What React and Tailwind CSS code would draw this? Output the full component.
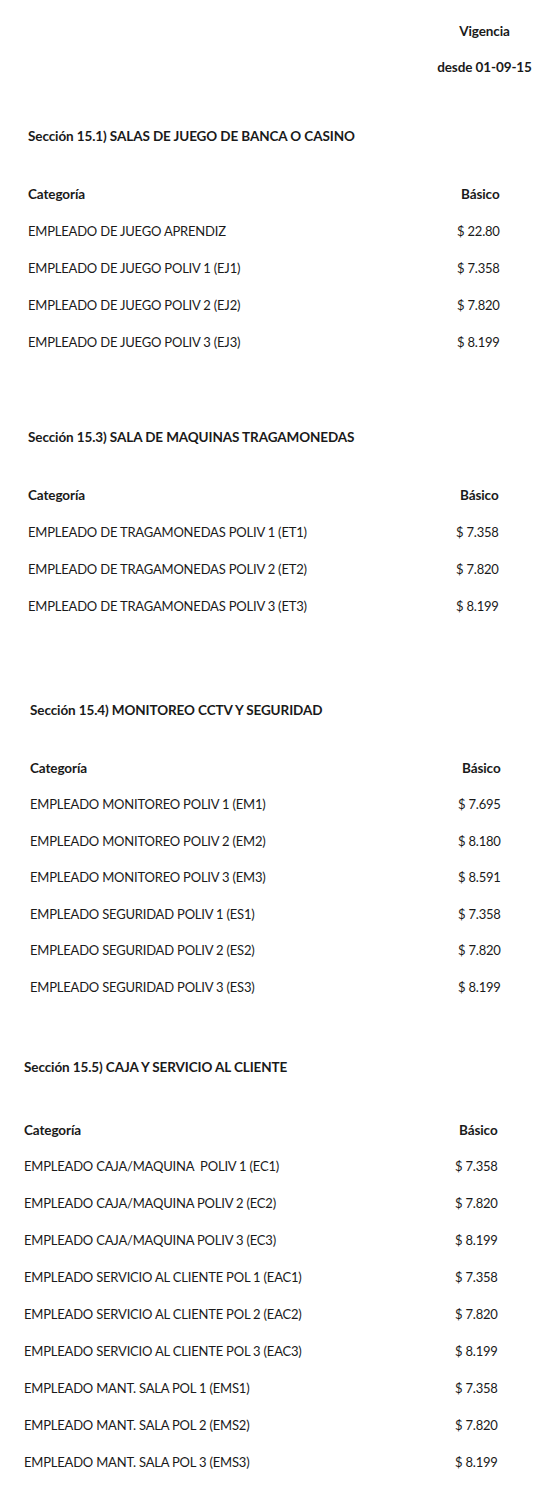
import React from 'react';

const SECTIONS = [
  {
    title: 'Sección 15.1) SALAS DE JUEGO DE BANCA O CASINO',
    top: 'mt-[33px]',
    headGap: 'mt-[21px]',
    row: 'h-[37px]',
    left: 'pl-[28px]',
    price: 'w-[429px]',
    items: [
      ['EMPLEADO DE JUEGO APRENDIZ', '$ 22.80'],
      ['EMPLEADO DE JUEGO POLIV 1 (EJ1)', '$ 7.358'],
      ['EMPLEADO DE JUEGO POLIV 2 (EJ2)', '$ 7.820'],
      ['EMPLEADO DE JUEGO POLIV 3 (EJ3)', '$ 8.199'],
    ],
  },
  {
    title: 'Sección 15.3) SALA DE MAQUINAS TRAGAMONEDAS',
    top: 'mt-[58px]',
    headGap: 'mt-[21px]',
    row: 'h-[37px]',
    left: 'pl-[28px]',
    price: 'w-[428px]',
    items: [
      ['EMPLEADO DE TRAGAMONEDAS POLIV 1 (ET1)', '$ 7.358'],
      ['EMPLEADO DE TRAGAMONEDAS POLIV 2 (ET2)', '$ 7.820'],
      ['EMPLEADO DE TRAGAMONEDAS POLIV 3 (ET3)', '$ 8.199'],
    ],
  },
  {
    title: 'Sección 15.4) MONITOREO CCTV Y SEGURIDAD',
    top: 'mt-[67px]',
    headGap: 'mt-[21px]',
    row: 'h-[36.5px]',
    left: 'pl-[30px]',
    price: 'w-[428px]',
    items: [
      ['EMPLEADO MONITOREO POLIV 1 (EM1)', '$ 7.695'],
      ['EMPLEADO MONITOREO POLIV 2 (EM2)', '$ 8.180'],
      ['EMPLEADO MONITOREO POLIV 3 (EM3)', '$ 8.591'],
      ['EMPLEADO SEGURIDAD POLIV 1 (ES1)', '$ 7.358'],
      ['EMPLEADO SEGURIDAD POLIV 2 (ES2)', '$ 7.820'],
      ['EMPLEADO SEGURIDAD POLIV 3 (ES3)', '$ 8.199'],
    ],
  },
  {
    title: 'Sección 15.5) CAJA Y SERVICIO AL CLIENTE',
    top: 'mt-[43px]',
    headGap: 'mt-[26px]',
    row: 'h-[37px]',
    left: 'pl-[24px]',
    price: 'w-[431px]',
    items: [
      ['EMPLEADO CAJA/MAQUINA  POLIV 1 (EC1)', '$ 7.358'],
      ['EMPLEADO CAJA/MAQUINA POLIV 2 (EC2)', '$ 7.820'],
      ['EMPLEADO CAJA/MAQUINA POLIV 3 (EC3)', '$ 8.199'],
      ['EMPLEADO SERVICIO AL CLIENTE POL 1 (EAC1)', '$ 7.358'],
      ['EMPLEADO SERVICIO AL CLIENTE POL 2 (EAC2)', '$ 7.820'],
      ['EMPLEADO SERVICIO AL CLIENTE POL 3 (EAC3)', '$ 8.199'],
      ['EMPLEADO MANT. SALA POL 1 (EMS1)', '$ 7.358'],
      ['EMPLEADO MANT. SALA POL 2 (EMS2)', '$ 7.820'],
      ['EMPLEADO MANT. SALA POL 3 (EMS3)', '$ 8.199'],
    ],
  },
];

function Section({ s }) {
  return (
    <section className={`${s.top} ${s.left}`}>
      <h2 className="h-[37px] flex items-center font-bold text-[13.5px] tracking-[-0.1px]">{s.title}</h2>
      <div className={`${s.headGap} ${s.row} flex items-center font-bold text-[13.5px] tracking-[-0.1px]`}>
        <span className={`${s.price} shrink-0`}>Categoría</span>
        <span className="pl-[4px]">Básico</span>
      </div>
      {s.items.map(([name, value]) => (
        <div key={name} className={`${s.row} flex items-center`}>
          <span className={`${s.price} shrink-0 whitespace-pre`}>{name}</span>
          <span>{value}</span>
        </div>
      ))}
    </section>
  );
}

export default function App() {
  return (
    <div className="w-[551px] min-h-[1491px] bg-white text-[#1a1a1a] text-[13px] tracking-[-0.2px] font-['Lato',sans-serif] pt-[13px]">
      <div className="flex justify-end pr-[18px] font-bold text-[13.5px] tracking-[-0.1px]">
        <div className="w-[97px] text-center">
          <div className="h-[36px] flex items-center justify-center">Vigencia</div>
          <div className="h-[36px] flex items-center justify-center whitespace-nowrap">desde 01-09-15</div>
        </div>
      </div>
      {SECTIONS.map((s) => (
        <Section key={s.title} s={s} />
      ))}
    </div>
  );
}
